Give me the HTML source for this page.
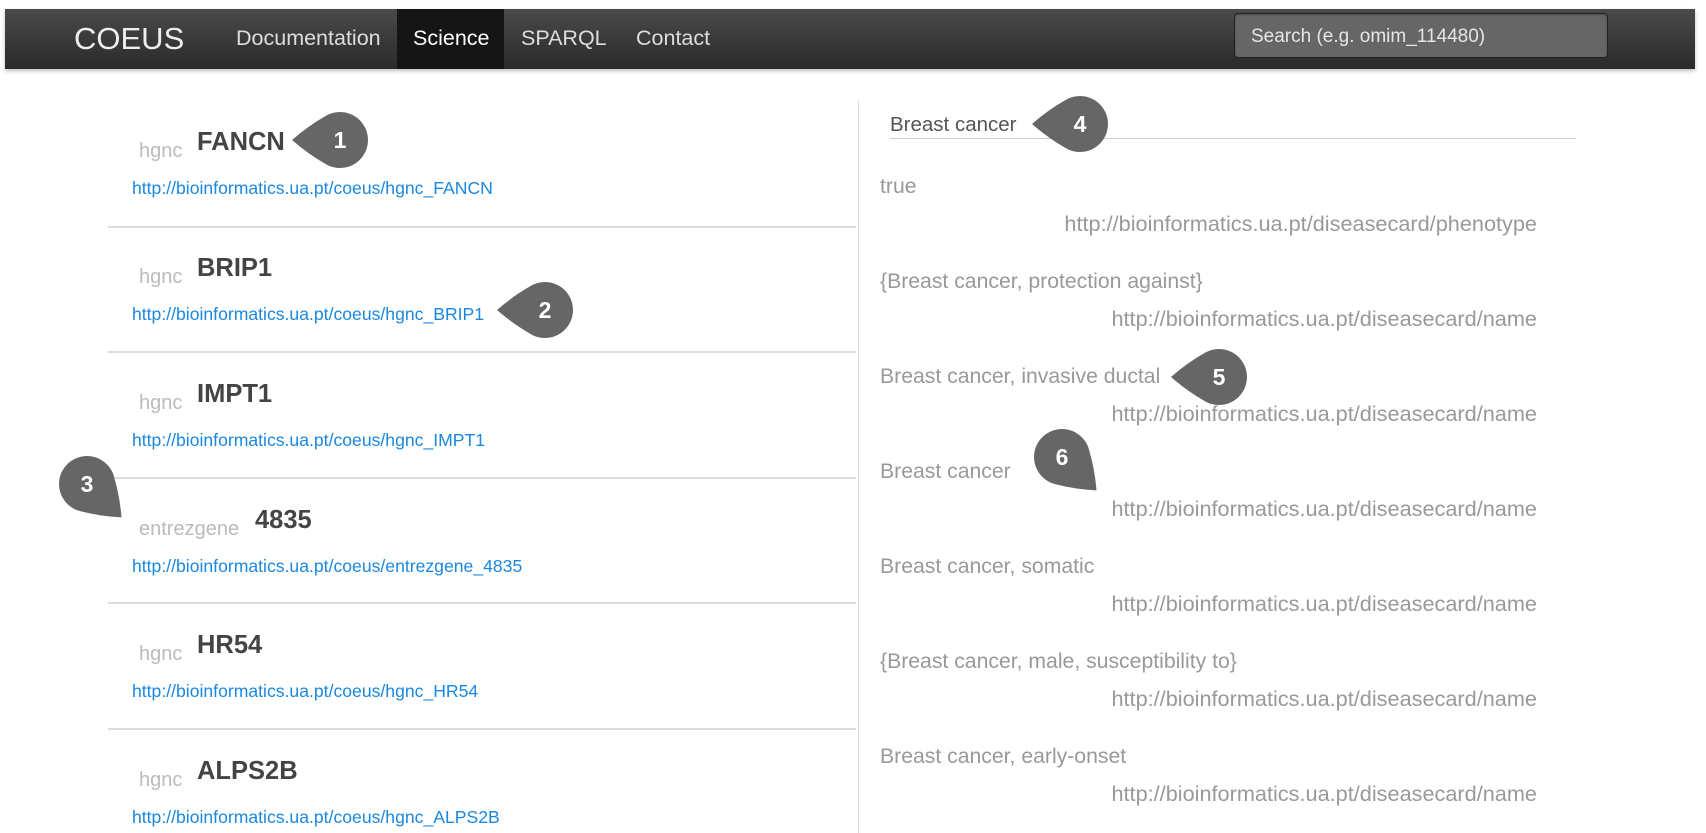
<!DOCTYPE html>
<html><head><meta charset="utf-8"><style>
body{margin:0;width:1706px;height:833px;background:#fff;font-family:"Liberation Sans",Arial,sans-serif;position:relative;overflow:hidden}
.nav{position:absolute;left:5px;top:9px;width:1690px;height:60px;background:linear-gradient(#4a4a4a,#2a2a2a);box-shadow:0 2px 4px rgba(0,0,0,.25)}
.nav span{position:absolute;color:#ddd;font-size:21.5px;top:17px}
.brand{position:absolute;left:69px;top:12px;font-size:31px;color:#eee}
.act{position:absolute;left:392px;top:0;width:107px;height:60px;background:#151515}
.search{position:absolute;left:1229px;top:4px;width:372px;height:43px;background:#666;border:1px solid #222;border-radius:4px;box-shadow:inset 0 1px 2px rgba(0,0,0,.3)}
.search span{position:absolute;left:16px;top:12px;font-size:19px;color:#e6e6e6}
.t{position:absolute;white-space:nowrap}
.sm{font-size:20px;color:#bbb}
.ti{font-size:25.5px;font-weight:bold;color:#444}
.lk{font-size:17.6px;color:#1a88e0}
.sep{position:absolute;left:108px;width:748px;height:2px;background:#ddd}
.lb{position:absolute;left:880px;font-size:21.2px;color:#999;white-space:nowrap}
.ur{position:absolute;right:169px;font-size:21.7px;color:#999;white-space:nowrap}
</style></head><body>
<div class="nav">
<div class="act"></div>
<div class="brand">COEUS</div>
<span style="left:231px">Documentation</span>
<span style="left:408px;color:#fff">Science</span>
<span style="left:516px">SPARQL</span>
<span style="left:631px">Contact</span>
<div class="search"><span>Search (e.g. omim_114480)</span></div>
</div>
<div style="position:absolute;left:858px;top:100px;width:1px;height:733px;background:#ddd"></div>

<div class="t sm" style="left:139px;top:140px">hgnc</div><div class="t ti" style="left:197px;top:128px">FANCN</div>
<div class="t lk" style="left:132px;top:178px">http://bioinformatics.ua.pt/coeus/hgnc_FANCN</div>
<div class="sep" style="top:226px"></div>
<div class="t sm" style="left:139px;top:266px">hgnc</div><div class="t ti" style="left:197px;top:254px">BRIP1</div>
<div class="t lk" style="left:132px;top:304px">http://bioinformatics.ua.pt/coeus/hgnc_BRIP1</div>
<div class="sep" style="top:351px"></div>
<div class="t sm" style="left:139px;top:392px">hgnc</div><div class="t ti" style="left:197px;top:380px">IMPT1</div>
<div class="t lk" style="left:132px;top:430px">http://bioinformatics.ua.pt/coeus/hgnc_IMPT1</div>
<div class="sep" style="top:477px"></div>
<div class="t sm" style="left:139px;top:518px">entrezgene</div><div class="t ti" style="left:255px;top:506px">4835</div>
<div class="t lk" style="left:132px;top:556px">http://bioinformatics.ua.pt/coeus/entrezgene_4835</div>
<div class="sep" style="top:602px"></div>
<div class="t sm" style="left:139px;top:643px">hgnc</div><div class="t ti" style="left:197px;top:631px">HR54</div>
<div class="t lk" style="left:132px;top:681px">http://bioinformatics.ua.pt/coeus/hgnc_HR54</div>
<div class="sep" style="top:728px"></div>
<div class="t sm" style="left:139px;top:769px">hgnc</div><div class="t ti" style="left:197px;top:757px">ALPS2B</div>
<div class="t lk" style="left:132px;top:807px">http://bioinformatics.ua.pt/coeus/hgnc_ALPS2B</div>

<div class="t" style="left:890px;top:113px;font-size:20.5px;color:#555">Breast cancer</div>
<div style="position:absolute;left:890px;top:138px;width:686px;height:1px;background:#ccc"></div>

<div class="lb" style="top:175px">true</div>
<div class="ur" style="top:211px">http://bioinformatics.ua.pt/diseasecard/phenotype</div>
<div class="lb" style="top:270px">{Breast cancer, protection against}</div>
<div class="ur" style="top:306px">http://bioinformatics.ua.pt/diseasecard/name</div>
<div class="lb" style="top:365px">Breast cancer, invasive ductal</div>
<div class="ur" style="top:401px">http://bioinformatics.ua.pt/diseasecard/name</div>
<div class="lb" style="top:460px">Breast cancer</div>
<div class="ur" style="top:496px">http://bioinformatics.ua.pt/diseasecard/name</div>
<div class="lb" style="top:555px">Breast cancer, somatic</div>
<div class="ur" style="top:591px">http://bioinformatics.ua.pt/diseasecard/name</div>
<div class="lb" style="top:650px">{Breast cancer, male, susceptibility to}</div>
<div class="ur" style="top:686px">http://bioinformatics.ua.pt/diseasecard/name</div>
<div class="lb" style="top:745px">Breast cancer, early-onset</div>
<div class="ur" style="top:781px">http://bioinformatics.ua.pt/diseasecard/name</div>

<svg width="1706" height="833" style="position:absolute;left:0;top:0" font-family="Liberation Sans, Arial, sans-serif" font-weight="bold" font-size="23" fill="#fff" text-anchor="middle">
<defs><path id="d" d="M-48,0 Q-32,-14 -15.7,-23.2 A28,28 0 1,1 -15.7,23.2 Q-32,14 -48,0 Z" fill="#666"/></defs>
<g transform="translate(340,140)"><use href="#d"/><text y="8">1</text></g>
<g transform="translate(545,310)"><use href="#d"/><text y="8">2</text></g>
<g transform="translate(87,484)"><use href="#d" transform="rotate(224)"/><text y="8">3</text></g>
<g transform="translate(1080,124)"><use href="#d"/><text y="8">4</text></g>
<g transform="translate(1219,377)"><use href="#d"/><text y="8">5</text></g>
<g transform="translate(1062,457)"><use href="#d" transform="rotate(224)"/><text y="8">6</text></g>
</svg>
</body></html>
